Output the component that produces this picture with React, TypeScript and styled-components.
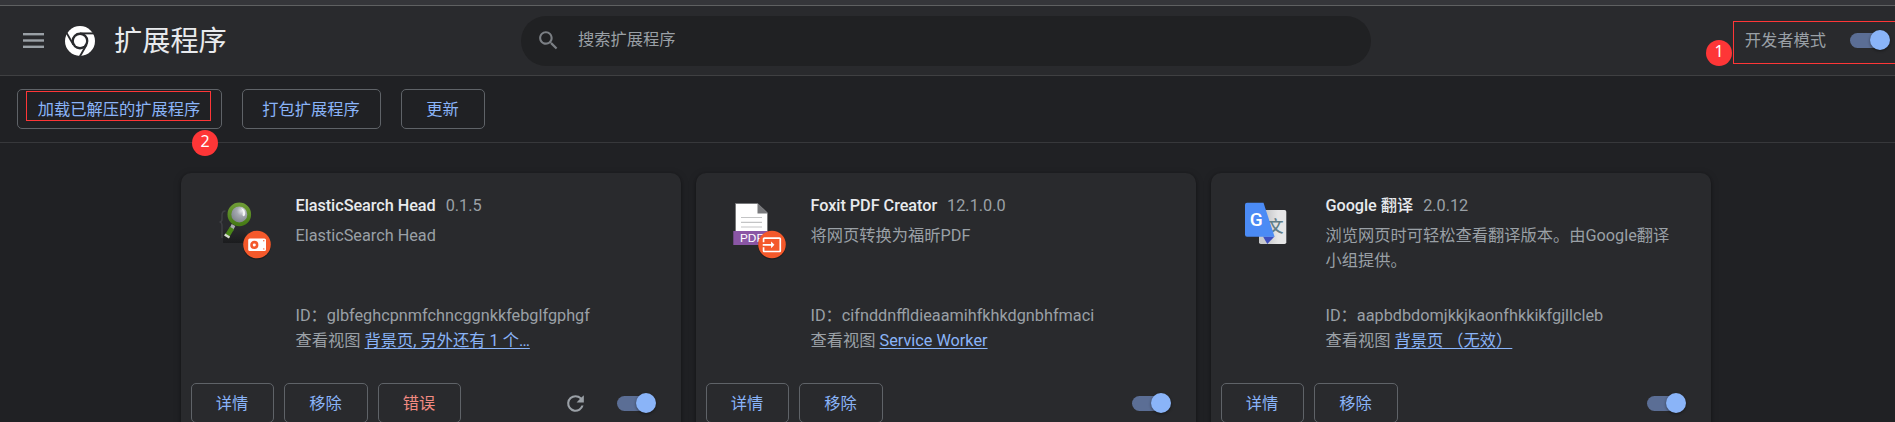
import React from "react";
import styled, { createGlobalStyle } from "styled-components";

const GlobalStyle = createGlobalStyle`
  *, *::before, *::after { box-sizing: border-box; }
  html, body { margin: 0; height: 100%; overflow: hidden; background: #202124; }
  body {
    font-family: Roboto, "Noto Sans CJK SC", sans-serif;
    font-size: 16.25px;
    line-height: 25px;
    color: #9aa0a6;
  }
`;

const Page = styled.div`
  position: relative;
  height: 422px;
  overflow: hidden;
  display: flex;
  flex-direction: column;
`;

const BrowserEdge = styled.div`
  flex: none;
  height: 6px;
  background: #35363a;
  border-bottom: 1px solid #5f6162;
`;

const Header = styled.header`
  flex: none;
  height: 70px;
  display: flex;
  align-items: center;
  padding: 0 5px 0 23px;
  background: #292a2d;
  border-bottom: 1px solid #3f4042;
`;

const Brand = styled.div`
  flex: none;
  width: 498px;
  display: flex;
  align-items: center;

  > svg { display: block; flex: none; }
`;

const Title = styled.h1`
  margin: 0 0 0 19px;
  padding-top: 3px;
  font-size: 28.2px;
  font-weight: 400;
  line-height: 40px;
  color: #e8eaed;
`;

const SearchBox = styled.div`
  flex: none;
  width: 850px;
  height: 50px;
  display: flex;
  align-items: center;
  gap: 17px;
  padding: 0 15px;
  border-radius: 25px;
  background: #202123;
  color: #9aa0a6;

  > svg { display: block; fill: #7b7f84; }
  > span { padding-bottom: 2px; }
`;

const DevMode = styled.label`
  margin-left: auto;
  display: flex;
  align-items: center;
  gap: 24px;
`;

const ToggleTrack = styled.span<{ $width?: number }>`
  position: relative;
  flex: none;
  display: block;
  width: ${(p) => p.$width ?? 39}px;
  height: 15px;

  &::before {
    content: "";
    position: absolute;
    inset: 0 5px 0 0;
    border-radius: 8px;
    background: #5b6e95;
  }
  &::after {
    content: "";
    position: absolute;
    right: 0;
    top: -3px;
    width: 20px;
    height: 20px;
    border-radius: 50%;
    background: #8ab4f8;
    box-shadow: 0 1px 3px rgba(0, 0, 0, 0.45);
  }
`;

const Toolbar = styled.div`
  flex: none;
  height: 67px;
  display: flex;
  align-items: center;
  gap: 20px;
  padding: 0 17px;
  border-bottom: 1px solid #37383b;
`;

const Button = styled.button<{ $width: number; $danger?: boolean }>`
  flex: none;
  width: ${(p) => p.$width}px;
  height: 40px;
  padding: 0 1px 0 0;
  border: 1px solid #5f6368;
  border-radius: 5px;
  background: transparent;
  font: inherit;
  white-space: nowrap;
  color: ${(p) => (p.$danger ? "#f28b82" : "#8ab4f8")};
`;

const Cards = styled.main`
  flex: none;
  display: flex;
  gap: 15px;
  padding: 30px 0 0 181px;
`;

const Card = styled.article`
  flex: none;
  width: 500px;
  height: 260px;
  display: flex;
  flex-direction: column;
  border-radius: 10px;
  background: #292a2d;
  box-shadow: 0 1px 3px rgba(0, 0, 0, 0.35), 0 2px 8px rgba(0, 0, 0, 0.2);
`;

const CardBody = styled.div`
  height: 210px;
  display: flex;
  padding: 20px 36px 0 30px;
`;

const Artwork = styled.div`
  flex: none;
  width: 84.5px;

  > svg { display: block; overflow: visible; }
`;

const Info = styled.div`
  flex: 1;
  min-width: 0;
  display: flex;
  flex-direction: column;
`;

const NameRow = styled.div`
  display: flex;
  gap: 10px;
  height: 30px;
`;

const Name = styled.span`
  font-weight: 500;
  letter-spacing: -0.05px;
  color: #e8eaed;
`;

const Description = styled.p`
  margin: 0;
  height: 80px;
`;

const Detail = styled.div`
  height: 25px;
  white-space: nowrap;
`;

const ViewLink = styled.a`
  color: #8ab4f8;
  text-decoration: underline;
  text-underline-offset: 2px;
  text-decoration-thickness: 1px;
  text-decoration-skip-ink: none;
`;

const Actions = styled.footer`
  display: flex;
  align-items: center;
  gap: 10px;
  height: 40px;
  padding: 0 25px 0 10px;
`;

const Controls = styled.div`
  margin-left: auto;
  display: flex;
  align-items: center;
  gap: 29px;

  > svg { display: block; fill: #9aa0a6; }
`;

const Outline = styled.div<{ $x: number; $y: number; $w: number; $h: number }>`
  position: absolute;
  left: ${(p) => p.$x}px;
  top: ${(p) => p.$y}px;
  width: ${(p) => p.$w}px;
  height: ${(p) => p.$h}px;
  border: 1px solid #fe3637;
`;

const StepBadge = styled.div<{ $x: number; $y: number }>`
  position: absolute;
  left: ${(p) => p.$x}px;
  top: ${(p) => p.$y}px;
  width: 26px;
  height: 26px;
  border-radius: 50%;
  background: #fe3637;
  color: #fff;
  font: 16px/22px "Noto Sans", sans-serif;
  text-align: center;
`;

const MenuIcon = () => (
  <svg width="21" height="15" viewBox="0 0 21 15" fill="#9aa0a6">
    <rect width="21" height="2.4" />
    <rect y="6.3" width="21" height="2.4" />
    <rect y="12.6" width="21" height="2.4" />
  </svg>
);

const LogoSvg = styled.svg`
  margin-left: 21px;
`;

const ChromeLogo = () => (
  <LogoSvg width="30" height="30" viewBox="-15 -15 30 30">
    <circle r="15" fill="#fff" />
    <circle r="8.4" fill="#292a2d" />
    <circle r="6.1" fill="#fff" />
    {[0, 120, 240].map((angle) => (
      <path
        key={angle}
        d="M0 -7.6H15.5"
        stroke="#292a2d"
        strokeWidth="1.9"
        transform={`rotate(${angle})`}
      />
    ))}
  </LogoSvg>
);

const SearchIcon = () => (
  <svg width="25" height="25" viewBox="0 0 24 24">
    <path d="M15.5 14h-.79l-.28-.27C15.41 12.59 16 11.11 16 9.5 16 5.91 13.09 3 9.5 3S3 5.91 3 9.5 5.91 16 9.5 16c1.61 0 3.09-.59 4.23-1.57l.27.28v.79l5 4.99L20.49 19l-4.99-5zm-6 0C7.01 14 5 11.99 5 9.5S7.01 5 9.5 5 14 7.01 14 9.5 11.99 14 9.5 14z" />
  </svg>
);

const ReloadIcon = () => (
  <svg width="25" height="25" viewBox="0 0 24 24">
    <path d="M17.65 6.35A7.96 7.96 0 0 0 12 4a8 8 0 1 0 7.73 10h-2.08A6 6 0 1 1 12 6c1.66 0 3.14.69 4.22 1.78L13 11h7V4l-2.35 2.35z" />
  </svg>
);

const SourceBadge = ({ children }: { children: React.ReactNode }) => (
  <g transform="translate(46 51.5)">
    <circle cy="1" r="14" fill="#000" opacity="0.3" />
    <circle r="13.8" fill="#f4592b" />
    {children}
  </g>
);

const MagnifierArt = () => (
  <svg width="60" height="66" viewBox="0 0 60 66">
    <defs>
      <radialGradient id="lens" cx="0.62" cy="0.32" r="0.7">
        <stop offset="0" stopColor="#e4e6ea" />
        <stop offset="0.35" stopColor="#a5a9b0" />
        <stop offset="1" stopColor="#777c84" />
      </radialGradient>
      <linearGradient id="rim" x1="0" y1="0" x2="0" y2="1">
        <stop offset="0" stopColor="#6d9b35" />
        <stop offset="1" stopColor="#477c16" />
      </linearGradient>
      <linearGradient id="shade" x1="0" y1="0" x2="0" y2="1">
        <stop offset="0" stopColor="#292a2d" />
        <stop offset="1" stopColor="#1b1c1e" />
      </linearGradient>
    </defs>
    <path d="M12 35H30Q37 37 37 48V50H12Z" fill="url(#shade)" />
    <path d="M14.500 18Q11 18 11 22V26Q11 29 8.500 29Q11 29 11 33V45" fill="none" stroke="#444548" strokeWidth="1.500" opacity="0.800" />
    <path d="M22.500 32L20 37" stroke="#a9acaf" strokeWidth="4" />
    <path d="M21 35L15.500 44" stroke="#4a8618" strokeWidth="5" />
    <path d="M13.700 41.500L18.500 44.500" stroke="#d7d9d4" strokeWidth="2.200" />
    <circle cx="28.300" cy="21.400" r="9.900" fill="url(#lens)" stroke="url(#rim)" strokeWidth="3.800" />
    <path d="M30 15Q35 16.500 34 22Q32.500 24.500 31.500 22Q32.500 18 30 15Z" fill="#fff" opacity="0.850" />
    <SourceBadge>
      <rect x="-8.800" y="-6" width="17.800" height="12.600" rx="1.600" fill="#fff" />
      <circle cx="-2.700" cy="0.400" r="2.800" fill="none" stroke="#f4592b" strokeWidth="2.600" />
      <circle cx="6.800" cy="-3.700" r="0.700" fill="#f4592b" />
      <circle cx="6.800" cy="4.400" r="0.700" fill="#f4592b" />
    </SourceBadge>
  </svg>
);

const PdfArt = () => (
  <svg width="60" height="66" viewBox="0 0 60 66">
    <path d="M9.500 10.500H31.500L41.500 20V40H9.500Z" fill="#fff" stroke="#78797b" strokeWidth="1" />
    <path d="M31.500 10L41.800 20.500H31.500Z" fill="#77787b" />
    <path d="M15 24.500H36M15 29.300H36M15 34H36" stroke="#c3c4c5" strokeWidth="1.200" />
    <rect x="7.300" y="38" width="34.700" height="14" fill="#8a56a5" />
    <text x="14" y="49" fontFamily="Liberation Sans, sans-serif" fontSize="11.800" fill="#fff">PDF</text>
    <SourceBadge>
      <path
        transform="translate(-10.100 -9.700) scale(0.835)"
        fill="#fff"
        d="M21 3.010H3c-1.100 0-2 .900-2 2V9h2V4.990h18v14.030H3V15H1v4.010c0 1.100.900 1.980 2 1.980h18c1.100 0 2-.880 2-1.980v-14c0-1.110-.900-2-2-2zM11 16l4-4-4-4v3H1v2h10v3z"
      />
    </SourceBadge>
  </svg>
);

const TranslateArt = () => (
  <svg width="60" height="66" viewBox="4 0 60 66">
    <defs>
      <linearGradient id="sheet" x1="0" x2="1">
        <stop offset="0.300" stopColor="#c9cacc" />
        <stop offset="0.700" stopColor="#e6e6e7" />
      </linearGradient>
    </defs>
    <rect x="22" y="17" width="27.300" height="34" rx="1.800" fill="url(#sheet)" />
    <text x="30.500" y="39" fontFamily="Noto Sans CJK SC, sans-serif" fontSize="16" fontWeight="500" fill="#607d87">文</text>
    <path d="M26 43.500H37.500L30.300 51Z" fill="#3d4fc0" />
    <path d="M10 9.700H26.500L37.600 43.800H10Q8 43.800 8 41.800V11.700Q8 9.700 10 9.700Z" fill="#4b8bf5" />
    <text x="12.700" y="33" fontFamily="Roboto, sans-serif" fontWeight="500" fontSize="19" fill="#fff">G</text>
  </svg>
);

interface Extension {
  name: string;
  version: string;
  description: string;
  id: string;
  view: string;
  art: React.ReactNode;
  local?: boolean;
}

const extensions: Extension[] = [
  {
    name: "ElasticSearch Head",
    version: "0.1.5",
    description: "ElasticSearch Head",
    id: "glbfeghcpnmfchncggnkkfebglfgphgf",
    view: "背景页, 另外还有 1 个…",
    art: <MagnifierArt />,
    local: true,
  },
  {
    name: "Foxit PDF Creator",
    version: "12.1.0.0",
    description: "将网页转换为福昕PDF",
    id: "cifnddnffldieaamihfkhkdgnbhfmaci",
    view: "Service Worker",
    art: <PdfArt />,
  },
  {
    name: "Google 翻译",
    version: "2.0.12",
    description: "浏览网页时可轻松查看翻译版本。由Google翻译小组提供。",
    id: "aapbdbdomjkkjkaonfhkkikfgjllcleb",
    view: "背景页 （无效）",
    art: <TranslateArt />,
  },
];

const ExtensionCard = ({ item }: { item: Extension }) => (
  <Card>
    <CardBody>
      <Artwork>{item.art}</Artwork>
      <Info>
        <NameRow>
          <Name>{item.name}</Name>
          <span>{item.version}</span>
        </NameRow>
        <Description>{item.description}</Description>
        <Detail>ID：{item.id}</Detail>
        <Detail>
          查看视图 <ViewLink>{item.view}</ViewLink>
        </Detail>
      </Info>
    </CardBody>
    <Actions>
      <Button $width={83}>详情</Button>
      <Button $width={84}>移除</Button>
      {item.local && <Button $width={83} $danger>错误</Button>}
      <Controls>
        {item.local && <ReloadIcon />}
        <ToggleTrack />
      </Controls>
    </Actions>
  </Card>
);

export default function App() {
  return (
    <Page lang="zh-CN">
      <GlobalStyle />
      <BrowserEdge />
      <Header>
        <Brand>
          <MenuIcon />
          <ChromeLogo />
          <Title>扩展程序</Title>
        </Brand>
        <SearchBox>
          <SearchIcon />
          <span>搜索扩展程序</span>
        </SearchBox>
        <DevMode>
          开发者模式
          <ToggleTrack $width={40} />
        </DevMode>
      </Header>
      <Toolbar>
        <Button $width={205}>加载已解压的扩展程序</Button>
        <Button $width={139}>打包扩展程序</Button>
        <Button $width={84}>更新</Button>
      </Toolbar>
      <Cards>
        {extensions.map((item) => (
          <ExtensionCard key={item.id} item={item} />
        ))}
      </Cards>
      <Outline $x={26} $y={91} $w={185} $h={30} />
      <StepBadge $x={192} $y={130}>2</StepBadge>
      <Outline $x={1733} $y={21} $w={170} $h={43} />
      <StepBadge $x={1706} $y={40}>1</StepBadge>
    </Page>
  );
}
